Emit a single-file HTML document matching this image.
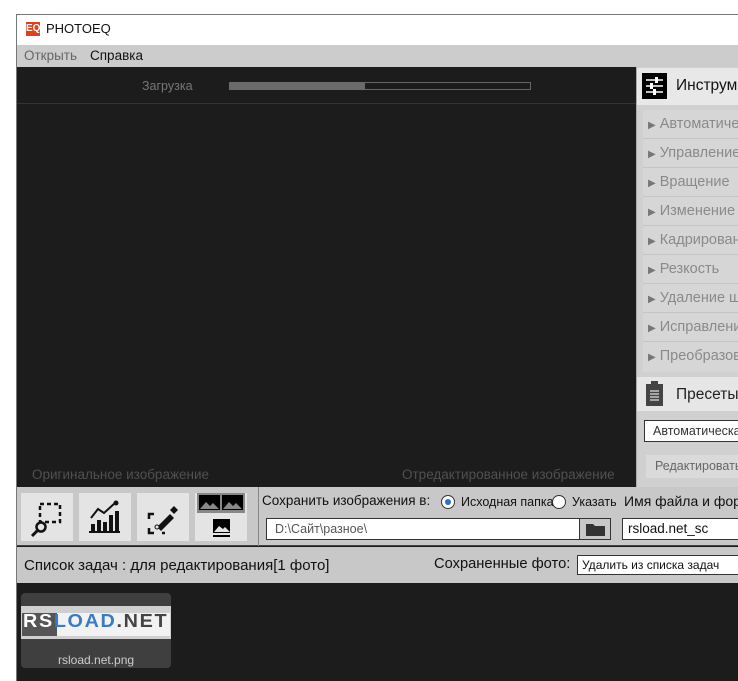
<!DOCTYPE html>
<html><head><meta charset="utf-8"><style>
*{margin:0;padding:0;box-sizing:border-box}
body{width:738px;height:681px;overflow:hidden;background:#fff;font-family:"Liberation Sans","DejaVu Sans",sans-serif;position:relative}
.a{position:absolute}
.t{white-space:nowrap}
</style></head><body>
<div class="a" style="left:16px;top:14px;width:722px;height:667px;border-left:1px solid #777;border-top:1px solid #777;background:#1c1c1c"></div>
<div class="a" style="left:17px;top:15px;width:721px;height:30px;background:#fff"></div>
<div class="a" style="left:26px;top:22px;width:14px;height:14px;background:#e0401a;color:#fff;font-size:10px;line-height:14px;text-align:center;font-weight:bold">EQ</div>
<div class="a t" style="left:46px;top:21px;font-size:13px;color:#111">PHOTOEQ</div>
<div class="a" style="left:17px;top:45px;width:721px;height:22px;background:#cccccc"></div>
<div class="a t" style="left:24px;top:48px;font-size:13.5px;color:#666">Открыть</div>
<div class="a t" style="left:90px;top:48px;font-size:13.5px;color:#111">Справка</div>
<div class="a t" style="left:142px;top:79px;font-size:12.5px;color:#777">Загрузка</div>
<div class="a" style="left:229px;top:82px;width:302px;height:8px;border:1px solid #666;background:#1c1c1c"></div>
<div class="a" style="left:229px;top:82px;width:136px;height:8px;background:#6a6a6a"></div>
<div class="a" style="left:17px;top:103px;width:619px;height:1px;background:#333"></div>
<div class="a t" style="left:32px;top:467px;font-size:13.5px;color:#505050">Оригинальное изображение</div>
<div class="a t" style="left:402px;top:467px;font-size:13.5px;color:#505050">Отредактированное изображение</div>
<div class="a" style="left:636px;top:67px;width:102px;height:420px;background:#d0d0d0;border-left:1px solid #aaa"></div>
<div class="a" style="left:637px;top:68px;width:101px;height:37px;background:#e8e8e8"></div>
<div class="a" style="left:642px;top:73px;width:25px;height:26px;background:#000"></div>
<svg class="a" style="left:642px;top:73px" width="25" height="26"><g stroke="#fff" stroke-width="1.5"><line x1="4" y1="7" x2="21" y2="7"/><line x1="4" y1="13" x2="21" y2="13"/><line x1="4" y1="19" x2="21" y2="19"/></g><g fill="#fff"><rect x="13" y="4" width="3" height="6"/><rect x="8" y="10" width="3" height="6"/><rect x="11" y="16" width="3" height="6"/></g></svg>
<div class="a t" style="left:676px;top:77px;font-size:15.5px;color:#111">Инструменты</div>
<div class="a" style="left:643px;top:110px;width:95px;height:262px;background:#d6d6d6"></div>
<div class="a" style="left:643px;top:110px;width:95px;font-size:14.5px;color:#8a8a8a">
<div style="height:29px;border-bottom:1px solid #c4c4c4;line-height:29px;padding-left:5px" class="t"><span style="font-size:10px;color:#777">▶</span> Автоматическая</div>
<div style="height:29px;border-bottom:1px solid #c4c4c4;line-height:29px;padding-left:5px" class="t"><span style="font-size:10px;color:#777">▶</span> Управление</div>
<div style="height:29px;border-bottom:1px solid #c4c4c4;line-height:29px;padding-left:5px" class="t"><span style="font-size:10px;color:#777">▶</span> Вращение</div>
<div style="height:29px;border-bottom:1px solid #c4c4c4;line-height:29px;padding-left:5px" class="t"><span style="font-size:10px;color:#777">▶</span> Изменение</div>
<div style="height:29px;border-bottom:1px solid #c4c4c4;line-height:29px;padding-left:5px" class="t"><span style="font-size:10px;color:#777">▶</span> Кадрирование</div>
<div style="height:29px;border-bottom:1px solid #c4c4c4;line-height:29px;padding-left:5px" class="t"><span style="font-size:10px;color:#777">▶</span> Резкость</div>
<div style="height:29px;border-bottom:1px solid #c4c4c4;line-height:29px;padding-left:5px" class="t"><span style="font-size:10px;color:#777">▶</span> Удаление ш</div>
<div style="height:29px;border-bottom:1px solid #c4c4c4;line-height:29px;padding-left:5px" class="t"><span style="font-size:10px;color:#777">▶</span> Исправление</div>
<div style="height:29px;line-height:29px;padding-left:5px" class="t"><span style="font-size:10px;color:#777">▶</span> Преобразование</div>
</div>
<div class="a" style="left:637px;top:377px;width:101px;height:34px;background:#e6e6e6"></div>
<svg class="a" style="left:645px;top:381px" width="20" height="26"><rect x="1" y="3" width="17" height="22" fill="#444"/><rect x="6" y="0" width="7" height="5" fill="#444"/><g stroke="#e6e6e6" stroke-width="1.2"><line x1="5" y1="10" x2="14" y2="10"/><line x1="5" y1="13" x2="14" y2="13"/><line x1="5" y1="16" x2="14" y2="16"/><line x1="5" y1="19" x2="14" y2="19"/></g></svg>
<div class="a t" style="left:676px;top:386px;font-size:15.5px;color:#222">Пресеты</div>
<div class="a t" style="left:644px;top:420px;width:94px;height:22px;background:#fff;border:1px solid #333;border-right:none;font-size:12.5px;color:#333;line-height:20px;padding-left:8px;overflow:hidden">Автоматическая</div>
<div class="a t" style="left:646px;top:455px;width:92px;height:23px;background:#dadada;font-size:12.5px;color:#666;line-height:23px;padding-left:9px;overflow:hidden">Редактировать</div>
<div class="a" style="left:17px;top:487px;width:721px;height:59px;background:#c8c8c8;border-bottom:1px solid #444"></div>
<div class="a" style="left:258px;top:487px;width:1px;height:59px;background:#888"></div>
<div class="a" style="left:21px;top:493px;width:52px;height:48px;background:#e4e4e4"></div>
<div class="a" style="left:79px;top:493px;width:52px;height:48px;background:#e4e4e4"></div>
<div class="a" style="left:137px;top:493px;width:52px;height:48px;background:#e4e4e4"></div>
<div class="a" style="left:195px;top:493px;width:52px;height:48px;background:#e4e4e4"></div>
<svg class="a" style="left:21px;top:493px" width="52" height="48"><rect x="19" y="11" width="20" height="18" fill="none" stroke="#111" stroke-width="2.5" stroke-dasharray="4 3"/><circle cx="20" cy="34" r="4.5" fill="#e4e4e4" stroke="#111" stroke-width="2.5"/><line x1="17" y1="37" x2="11" y2="43" stroke="#111" stroke-width="3"/></svg>
<svg class="a" style="left:79px;top:493px" width="52" height="48"><g fill="#111"><rect x="12" y="31" width="4" height="8"/><rect x="18" y="27" width="4" height="12"/><rect x="24" y="29" width="4" height="10"/><rect x="30" y="22" width="4" height="17"/><rect x="36" y="18" width="4" height="21"/><rect x="10" y="38" width="31" height="2"/></g><polyline points="12,25 19,16 25,20 36,10" fill="none" stroke="#111" stroke-width="2"/><circle cx="37" cy="10" r="2.5" fill="#111"/></svg>
<svg class="a" style="left:137px;top:493px" width="52" height="48"><path d="M12 26v-5h5M12 35v5h5M28 40h-3" fill="none" stroke="#111" stroke-width="2.5"/><path d="M20 34l13-13 4 4-13 13z" fill="#111"/><path d="M33 17l4-4 4 4-4 4z" fill="#111"/><circle cx="20" cy="34" r="2" fill="#e4e4e4" stroke="#111"/></svg>
<div class="a" style="left:197px;top:493px;width:48px;height:20px;background:#888"></div>
<svg class="a" style="left:197px;top:493px" width="48" height="48"><rect x="2" y="2" width="21" height="15" fill="#000"/><rect x="25" y="2" width="21" height="15" fill="#000"/><path d="M3 16l6-7 4 4 3-3 6 6z M26 16l6-7 4 4 3-3 6 6z" fill="#888"/><rect x="16" y="26" width="17" height="14" fill="#000"/><path d="M17 39l5-6 4 3 2-2 5 5z" fill="#e4e4e4"/><rect x="16" y="42" width="17" height="2" fill="#000"/></svg>
<div class="a t" style="left:262px;top:493px;font-size:13.5px;color:#111">Сохранить изображения в:</div>
<div class="a" style="left:441px;top:495px;width:14px;height:14px;border-radius:50%;border:1px solid #333;background:#fff"></div>
<div class="a" style="left:445px;top:499px;width:6px;height:6px;border-radius:50%;background:#2a6fd0"></div>
<div class="a t" style="left:461px;top:495px;font-size:12.5px;color:#111">Исходная папка</div>
<div class="a" style="left:552px;top:495px;width:14px;height:14px;border-radius:50%;border:1px solid #333;background:#fff"></div>
<div class="a t" style="left:572px;top:495px;font-size:12.5px;color:#111">Указать</div>
<div class="a t" style="left:624px;top:493px;font-size:14px;color:#111">Имя файла и формат</div>
<div class="a t" style="left:266px;top:518px;width:314px;height:22px;background:#fff;border:1px solid #333;font-size:12.5px;color:#555;line-height:20px;padding-left:8px">D:\Сайт\разное\</div>
<div class="a" style="left:579px;top:518px;width:32px;height:22px;background:#c8c8c8;border:1px solid #333"></div>
<svg class="a" style="left:585px;top:521px" width="21" height="16"><path d="M1 3h7l2 2h10v10H1z" fill="#333"/></svg>
<div class="a t" style="left:622px;top:518px;width:116px;height:22px;background:#fff;border:1px solid #333;border-right:none;font-size:13.5px;color:#111;line-height:20px;padding-left:5px">rsload.net_sc</div>
<div class="a" style="left:17px;top:547px;width:721px;height:36px;background:#c8c8c8"></div>
<div class="a t" style="left:24px;top:557px;font-size:15px;color:#111">Список задач : для редактирования[1 фото]</div>
<div class="a t" style="left:434px;top:556px;font-size:14.7px;color:#111">Сохраненные фото:</div>
<div class="a t" style="left:577px;top:555px;width:161px;height:20px;background:#fff;border:1px solid #333;border-right:none;font-size:12px;color:#111;line-height:18px;padding-left:4px">Удалить из списка задач</div>
<div class="a" style="left:21px;top:593px;width:150px;height:75px;background:#3f3f3f;border-radius:4px"></div>
<div class="a" style="left:21px;top:606px;width:150px;height:33px;background:#cfcfcf"></div>
<div class="a" style="left:22px;top:613px;width:148px;height:23px;background:#f2f2f2"></div>
<div class="a" style="left:22px;top:613px;width:35px;height:23px;background:#555"></div>
<div class="a t" style="left:23px;top:611px;font-size:18px;font-weight:bold;color:#fff;letter-spacing:1.5px;transform:scaleX(1.1);transform-origin:left">RS<span style="color:#3a7bc8">LOAD</span><span style="color:#444">.NET</span></div>
<div class="a t" style="left:58px;top:653px;font-size:12px;color:#ccc">rsload.net.png</div>
</body></html>
